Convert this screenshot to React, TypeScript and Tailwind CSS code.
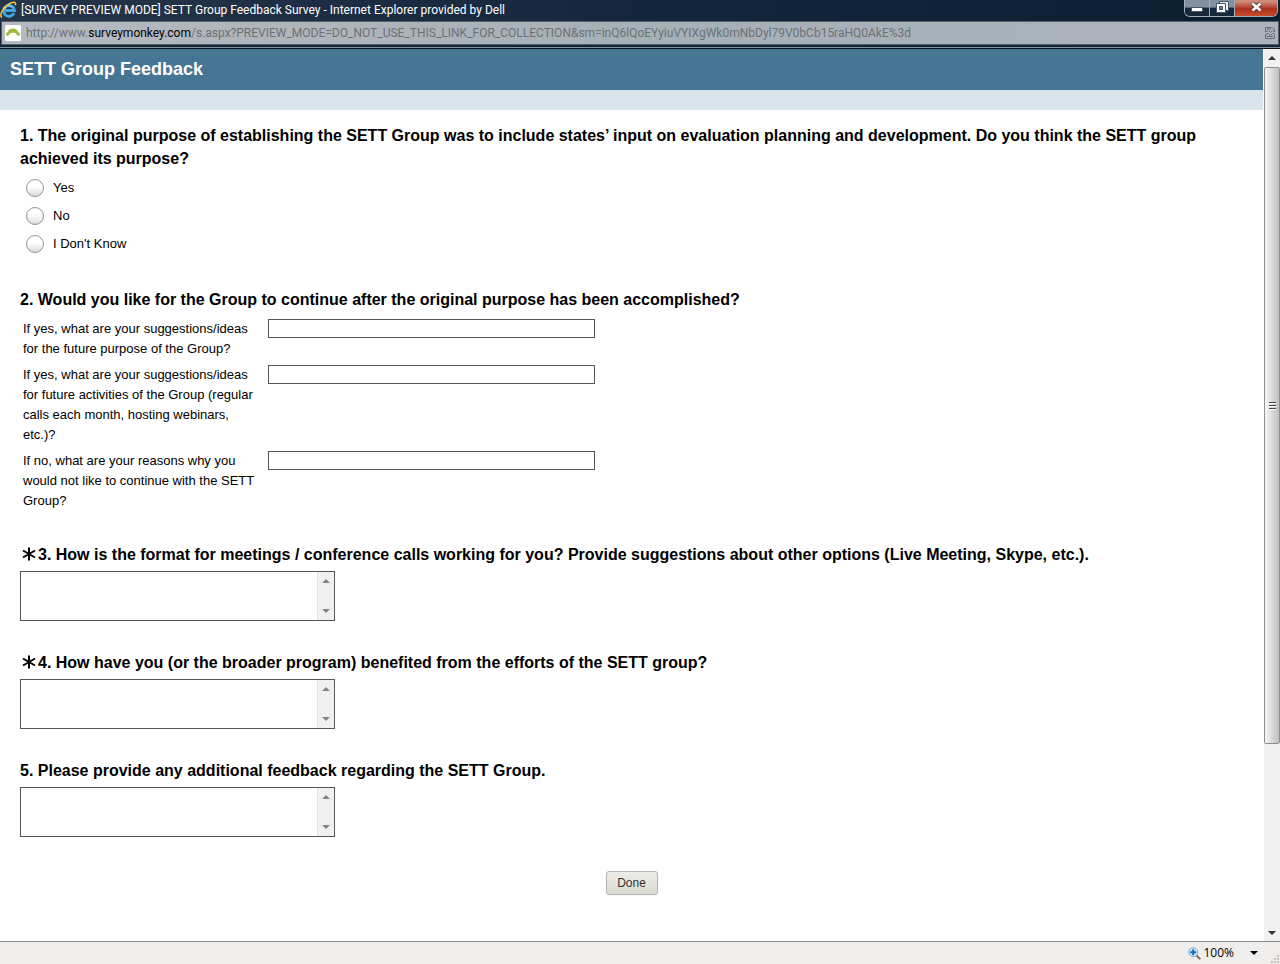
import { useState } from "react"

const choices = ["Yes", "No", "I Don't Know"]

const suggestions = [
  { id: "purpose", label: "If yes, what are your suggestions/ideas for the future purpose of the Group?" },
  {
    id: "activities",
    label: "If yes, what are your suggestions/ideas for future activities of the Group (regular calls each month, hosting webinars, etc.)?",
  },
  { id: "reasons", label: "If no, what are your reasons why you would not like to continue with the SETT Group?" },
]

const comments = [
  {
    id: "q3",
    required: true,
    text: "3. How is the format for meetings / conference calls working for you? Provide suggestions about other options (Live Meeting, Skype, etc.).",
  },
  {
    id: "q4",
    required: true,
    text: "4. How have you (or the broader program) benefited from the efforts of the SETT group?",
  },
  { id: "q5", required: false, text: "5. Please provide any additional feedback regarding the SETT Group." },
]

function Arrow({ down = false, className = "" }: { down?: boolean; className?: string }) {
  return (
    <svg width="8" height="4" viewBox="0 0 8 4" className={className} aria-hidden="true">
      <path d={down ? "M0 0h8L4 4z" : "M0 4h8L4 0z"} fill="currentColor" />
    </svg>
  )
}

function ExplorerIcon() {
  return (
    <svg width="18" height="18" viewBox="0 0 18 18" fill="none" className="shrink-0" aria-hidden="true">
      <path d="M14 12.2A5.4 5.4 0 1 1 14.5 9.500H4.500" stroke="#3fa9e8" strokeWidth="3" />
      <path d="M4.4 8.2a4.4 4.4 0 0 1 8-1.6" stroke="#a5defa" strokeWidth="1" />
      <path d="M2 16.5C-1 14.5 2.5 7 8.500 3.200 12.500 .7 16.500 .3 15.300 4.300" stroke="#f2c230" strokeWidth="1.600" />
    </svg>
  )
}

function TitleBar() {
  return (
    <header className="bg-[#14253a] font-[Roboto,sans-serif]">
      <div className="flex h-[21px] items-start justify-between bg-linear-to-r from-[#26354a] via-[#14263d] to-[#0b1e30]">
        <div className="flex h-5 min-w-0 items-center gap-[3px]">
          <ExplorerIcon />
          <h1 className="truncate text-xs text-white">
            [SURVEY PREVIEW MODE] SETT Group Feedback Survey - Internet Explorer provided by Dell
          </h1>
        </div>
        <div className="mr-[2px] flex h-[17px] shrink-0 overflow-hidden rounded-b-md border border-t-0 border-[#a5adb5]">
          <button
            type="button"
            aria-label="Minimize"
            className="flex w-[25px] items-center justify-center border-r border-[#a5adb5] bg-linear-to-b from-[#8290a0] from-45% to-[#16283c] to-50%"
          >
            <svg width="12" height="16" viewBox="0 0 12 16" aria-hidden="true">
              <rect x=".5" y="7.500" width="11" height="4" fill="#fff" stroke="#4a5564" />
            </svg>
          </button>
          <button
            type="button"
            aria-label="Restore"
            className="flex w-[25px] items-center justify-center border-r border-[#a5adb5] bg-linear-to-b from-[#8290a0] from-45% to-[#16283c] to-50%"
          >
            <svg width="13" height="16" viewBox="0 0 13 16" aria-hidden="true">
              <path d="M3.500 1.500h9v9h-9z" fill="#eee" stroke="#4a5564" />
              <path d="M.5 3.500h9v9h-9z" fill="#fff" stroke="#4a5564" />
              <path d="M3.500 6.500h3v3h-3z" fill="#8b95a2" stroke="#36465a" />
            </svg>
          </button>
          <button
            type="button"
            aria-label="Close"
            className="flex w-[42px] items-center justify-center bg-linear-to-b from-[#d08a7c] from-10% via-[#a92f1a] via-55% to-[#c84c2c]"
          >
            <svg width="13" height="16" viewBox="0 0 13 16" aria-hidden="true">
              <path d="M2.500 3.500l8 7M10.500 3.500l-8 7" stroke="#54404a" strokeWidth="4.500" />
              <path d="M2.500 3.500l8 7M10.500 3.500l-8 7" stroke="#fff" strokeWidth="2.600" />
            </svg>
          </button>
        </div>
      </div>
      <div className="mx-px flex h-6 items-center gap-[5px] border border-[#55606a] bg-linear-to-r from-[#b6bac0] via-[#a6b0b7] to-[#abb2ba] px-[3px]">
        <svg width="16" height="16" viewBox="0 0 16 16" className="shrink-0" aria-hidden="true">
          <rect width="16" height="16" rx="1.500" fill="#fff" />
          <path d="M1 9.500C.8 8 2 7.300 2.800 7.300 3.500 2.200 12.500 2.200 13.200 7.300 14 7.300 15.200 8 15 9.500 14.800 11 12.500 11.300 11.800 10 11 6.800 5 6.800 4.200 10 3.500 11.300 1.200 11 1 9.500z" fill="#9cbb36" />
        </svg>
        <p className="min-w-0 flex-1 truncate text-xs text-[#6c7175]">
          http://www.<span className="text-black">surveymonkey.com</span>
          /s.aspx?PREVIEW_MODE=DO_NOT_USE_THIS_LINK_FOR_COLLECTION&amp;sm=inQ6lQoEYyiuVYIXgWk0mNbDyl79V0bCb15raHQ0AkE%3d
        </p>
        <button type="button" aria-label="Compatibility View" className="shrink-0">
          <svg width="10" height="12" viewBox="0 0 10 12" fill="none" stroke="#656c72" aria-hidden="true">
            <path d="M.5 5V.5h7l2 2V5L7.500 3.500 5.500 5.500 3.500 3.500zM.5 7.500V11.500h9v-4l-2-1-2 2-2-2z" />
            <path d="M2 9.500h6M2 2h4" />
          </svg>
        </button>
      </div>
      <div className="h-1 border-b border-[#0a1017] pt-[2px]">
        <div className="h-px bg-[#7d9197]" />
      </div>
    </header>
  )
}

function PageScrollbar() {
  return (
    <div aria-hidden="true" className="flex w-[17px] shrink-0 flex-col border-l border-white bg-[#f0f0f0] text-[#333]">
      <div className="flex h-[18px] items-center justify-center">
        <Arrow />
      </div>
      <div className="flex flex-[79] items-center justify-center rounded-xs border border-[#8f8f8f] bg-linear-to-r from-[#f6f6f6] via-[#dcdcde] to-[#bfbfc3]">
        <svg width="7" height="9" viewBox="0 0 7 9">
          <path d="M0 1.500h7M0 4.500h7M0 7.500h7" stroke="#444" />
          <path d="M0 2.500h7M0 5.500h7M0 8.500h7" stroke="#fff" />
        </svg>
      </div>
      <div className="flex-[21]" />
      <div className="flex h-[17px] items-center justify-center">
        <Arrow down />
      </div>
    </div>
  )
}

function StatusBar() {
  return (
    <footer className="flex h-[23px] items-center justify-end border-t border-[#8c8c8c] bg-[#f0eded] font-['Open_Sans',sans-serif] text-xs text-black">
      <button type="button" className="flex items-center gap-[2px]">
        <svg width="13" height="13" viewBox="0 0 13 13" aria-hidden="true">
          <path d="M8 8l3.500 3.500" stroke="#8a7560" strokeWidth="2.400" strokeLinecap="round" />
          <circle cx="5.200" cy="5.200" r="4.500" fill="#d7ecfa" stroke="#8aa7c0" />
          <path d="M5.200 2.200v6M2.200 5.200h6" stroke="#1569c0" strokeWidth="2" />
        </svg>
        100%
      </button>
      <button type="button" aria-label="Zoom levels" className="ml-4 mr-3">
        <Arrow down />
      </button>
      <svg width="10" height="10" viewBox="0 0 10 10" className="self-end" aria-hidden="true">
        <path d="M7 1h2v2H7zM4 4h2v2H4zM7 4h2v2H7zM1 7h2v2H1zM4 7h2v2H4zM7 7h2v2H7z" fill="#c3c0c0" />
      </svg>
    </footer>
  )
}

export default function App() {
  const [answer, setAnswer] = useState("")

  return (
    <div className="flex min-h-screen flex-col bg-white font-['Liberation_Sans',Arial,sans-serif] text-black">
      <TitleBar />

      <div className="flex flex-1">
        <main className="min-w-0 flex-1">
          <h2 className="bg-[#467693] px-[10px] pt-2 pb-[9px] text-lg leading-6 font-bold text-white">SETT Group Feedback</h2>
          <div className="h-5 bg-[#dae5eb]" />

          <form className="flex flex-col gap-[30px] px-5 pt-[14px]" onSubmit={(e) => e.preventDefault()}>
            {/* Purpose achieved */}
            <fieldset>
              <legend className="text-base leading-[23px] font-bold">
                1. The original purpose of establishing the SETT Group was to include states’ input on evaluation planning and
                development. Do you think the SETT group achieved its purpose?
              </legend>
              <div className="pt-1">
                {choices.map((choice) => (
                  <label key={choice} className="flex h-7 items-center gap-[9px] pl-[6px] text-[13px]">
                    <input
                      type="radio"
                      name="achieved"
                      value={choice}
                      checked={answer === choice}
                      onChange={() => setAnswer(choice)}
                      className="size-[18px] appearance-none rounded-full border border-[#949494] bg-linear-to-b from-white from-40% to-[#dcdcdc] checked:border-4 checked:border-[#467693]"
                    />
                    {choice}
                  </label>
                ))}
              </div>
            </fieldset>

            {/* Continue afterwards */}
            <fieldset className="pb-[2px]">
              <legend className="text-base leading-[23px] font-bold">
                2. Would you like for the Group to continue after the original purpose has been accomplished?
              </legend>
              <div className="flex flex-col gap-[6px] pt-2 pl-[3px]">
                {suggestions.map(({ id, label }) => (
                  <div key={id} className="flex items-start gap-1">
                    <label htmlFor={id} className="w-[241px] text-[13px] leading-5">
                      {label}
                    </label>
                    <input id={id} type="text" className="h-[19px] w-[327px] border border-[#55565a] px-1 text-[13px]" />
                  </div>
                ))}
              </div>
            </fieldset>

            {/* Open comments */}
            {comments.map(({ id, required, text }) => (
              <div key={id}>
                <label htmlFor={id} className="flex items-center text-base leading-[23px] font-bold">
                  {required && (
                    <svg width="18" height="16" viewBox="0 0 18 16" className="shrink-0" aria-label="Required">
                      <path d="M9 .5v13M3 3.500l12 7M15 3.500l-12 7" stroke="#000" strokeWidth="2" />
                    </svg>
                  )}
                  {text}
                </label>
                <div className="mt-[5px] flex h-[50px] w-[315px] border border-[#55565a]">
                  <textarea id={id} className="min-w-0 flex-1 resize-none overflow-hidden px-1 text-[13px]" />
                  <div
                    aria-hidden="true"
                    className="flex w-[17px] flex-col items-center justify-between border-l border-[#e3e3e3] bg-[#f0f0f0] py-[7px] text-[#858585]"
                  >
                    <Arrow />
                    <Arrow down />
                  </div>
                </div>
              </div>
            ))}

            <div className="flex justify-center pt-1 pb-10">
              <button
                type="submit"
                className="h-6 w-[52px] rounded-[3px] border border-[#b5b5af] bg-linear-to-b from-[#ecede7] to-[#d9dbd0] text-xs text-[#333] shadow-xs"
              >
                Done
              </button>
            </div>
          </form>
        </main>
        <PageScrollbar />
      </div>

      <StatusBar />
    </div>
  )
}
